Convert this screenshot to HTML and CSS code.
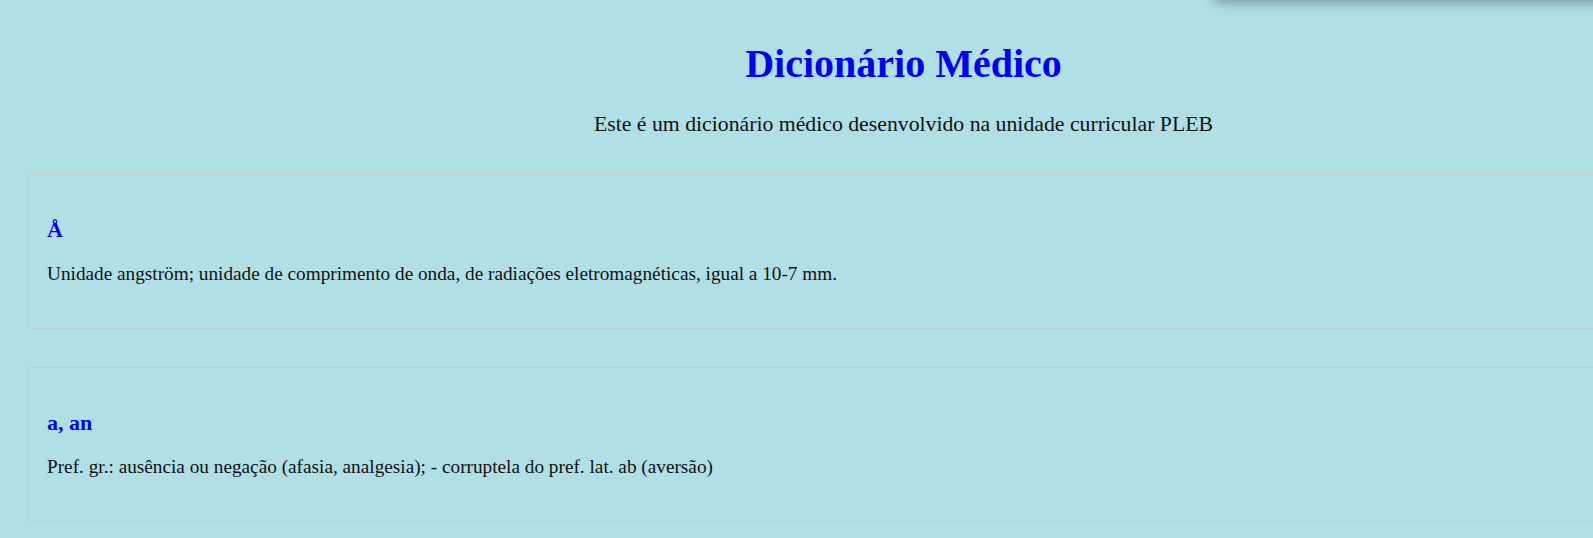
FILE: index.html
```html
<!DOCTYPE html>
<html lang="pt">
<head>
<meta charset="utf-8">
<title>Dicionário Médico</title>
<link rel="stylesheet" href="styles.css">
</head>
<body>
<div class="topbar-shadow"></div>
<div class="page">
  <header class="header">
    <h1 class="title">Dicionário Médico</h1>
    <p class="subtitle">Este é um dicionário médico desenvolvido na unidade curricular PLEB</p>
  </header>
  <main class="entries">
    <section class="entry">
      <h3 class="term">Å</h3>
      <p class="definition">Unidade angström; unidade de comprimento de onda, de radiações eletromagnéticas, igual a 10-7 mm.</p>
    </section>
    <section class="entry">
      <h3 class="term">a, an</h3>
      <p class="definition">Pref. gr.: ausência ou negação (afasia, analgesia); - corruptela do pref. lat. ab (aversão)</p>
    </section>
  </main>
</div>
</body>
</html>
```
FILE: styles.css
```css
html, body {
  margin: 0;
  padding: 0;
  overflow: hidden;
}
body {
  background: #b0e0e6;
  font-family: "Liberation Serif", "Times New Roman", serif;
  color: #111;
}
.topbar-shadow {
  position: fixed;
  top: -40px;
  left: 1215px;
  width: 600px;
  height: 40px;
  background: #b0e0e6;
  box-shadow: 0 2px 12px rgba(0, 0, 0, 0.35);
}
.page {
  width: 1791px;
  padding: 0 0 0 8px;
}
.header {
  text-align: center;
  padding-top: 1px;
}
.title {
  color: #0000ff;
  font-size: 40px;
  line-height: 44px;
  margin: 41px 0 0;
  font-weight: bold;
}
.subtitle {
  font-size: 21.75px;
  line-height: 24px;
  margin: 26px 0 0;
}
.entries {
  display: flex;
  flex-direction: column;
  gap: 38px;
  margin-top: 38px;
  padding-left: 19px;
}
.entry {
  border: 1px solid #c6ccd0;
  border-radius: 5px;
  padding: 20px 19px;
}
.term {
  color: #0000ff;
  font-size: 22px;
  line-height: 24px;
  margin: 23px 0 20px;
  font-weight: bold;
}
.definition {
  font-size: 19.25px;
  line-height: 24px;
  margin: 0 0 22px;
}
```
